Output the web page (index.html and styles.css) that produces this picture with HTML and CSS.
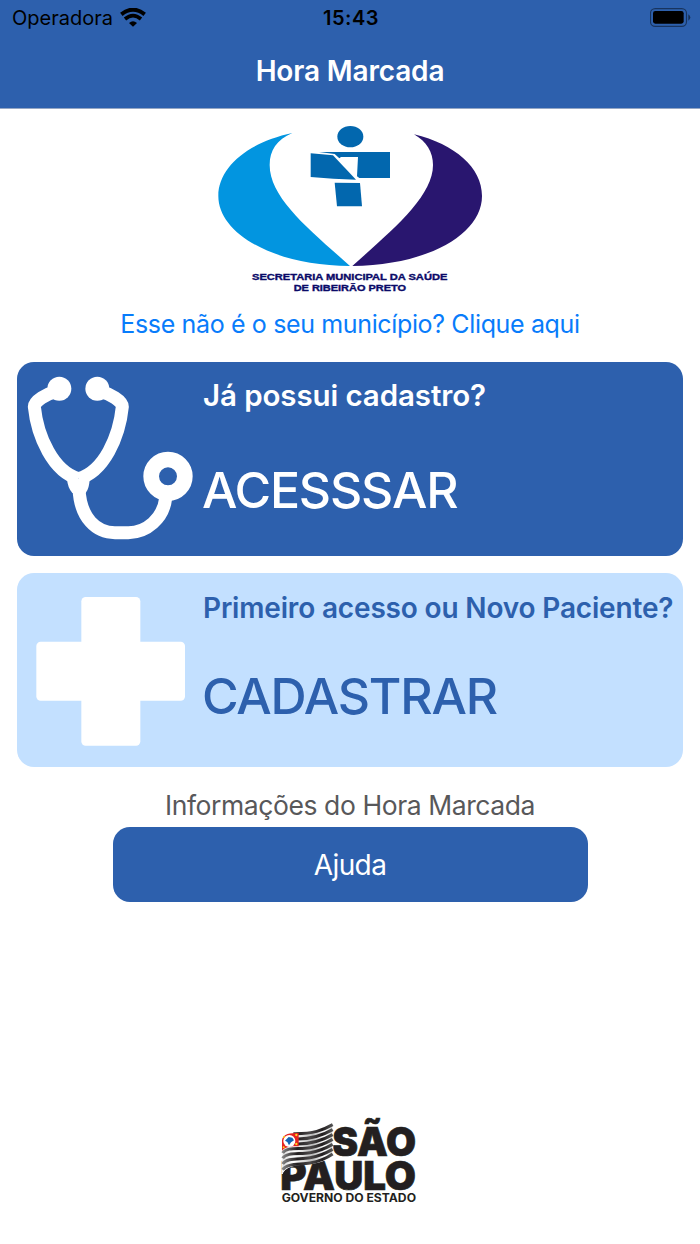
FILE: index.html
```html
<!DOCTYPE html>
<html lang="pt-BR">
<head>
    <meta charset="UTF-8">
    <meta name="viewport" content="width=device-width, initial-scale=1.0">
    <title>Hora Marcada</title>
    <link rel="stylesheet" href="styles.css">
</head>
<body>
<header class="header">
    <div class="status-bar">
        <div class="carrier">
            <span class="carrier-name">Operadora</span>
            <svg class="wifi" viewBox="0 0 78 57">
                <path d="M4 19 Q39 -9 74 19" fill="none" stroke="#000" stroke-width="12"/>
                <path d="M15 33 Q39 13 63 33" fill="none" stroke="#000" stroke-width="11"/>
                <path d="M27 45 Q39 34 51 45 L39 56z"/>
            </svg>
        </div>
        <span class="clock">15:43</span>
        <svg class="battery" viewBox="0 0 123 57">
            <rect x="1.5" y="2" width="108" height="53" rx="14" fill="none" stroke="#000" stroke-opacity=".45" stroke-width="3.5"/>
            <rect x="9" y="9" width="92" height="38" rx="7"/>
            <path d="M115 19 Q127 28 115 38z" fill-opacity=".5"/>
        </svg>
    </div>
    <h1 class="title">Hora Marcada</h1>
</header>

<main class="content">
    <svg class="city-logo" viewBox="0 0 900 555">
        <path fill="#0295e0" d="M277 54 C145 82 55 156 55 243 C55 355 220 452 450 453 C330 345 209 250 209 150 C209 105 230 75 277 54z"/>
        <path fill="#29166f" d="M642 58 C765 88 846 158 846 243 C846 355 690 450 457 453 C577 345 699 245 699 150 C699 112 680 80 642 58z"/>
        <g fill="#0267ae">
            <ellipse cx="451" cy="65" rx="39" ry="32"/>
            <path d="M332 115 L399 121 L468 194 Q400 193 332 186z"/>
            <path d="M357 111 H570 V189 H478 L471 184 L474 126 H423 L418 130 L404 117z"/>
            <path d="M404 203 L480 204 L486 274 H411z"/>
        </g>
        <text class="city-text" x="156" y="495" textLength="586" lengthAdjust="spacingAndGlyphs">SECRETARIA MUNICIPAL DA SAÚDE</text>
        <text class="city-text" x="281" y="528" textLength="337" lengthAdjust="spacingAndGlyphs">DE RIBEIRÃO PRETO</text>
    </svg>

    <a class="city-link" href="#">Esse não é o seu município? Clique aqui</a>

    <a class="card card-login" href="#">
        <svg class="card-icon" viewBox="21 21 534 582">
            <g fill="none" stroke="#fff" stroke-width="39">
                <path d="M140 109 C110 116 73 138 73 155 C82 245 130 350 205 371"/>
                <path d="M270 109 C300 116 337 138 337 155 C328 245 282 350 205 371"/>
                <path d="M207 400 C210 490 260 533 315 533 H355 C410 533 460 490 467 430"/>
                <circle cx="474" cy="364" r="50.5" stroke-width="47"/>
            </g>
            <g fill="#fff">
                <circle cx="148" cy="101" r="36"/>
                <circle cx="262" cy="101" r="36"/>
                <path d="M171 372 H239 Q238 400 227 414 H187 Q173 398 171 372z"/>
            </g>
        </svg>
        <div class="card-text">
            <span class="card-question">Já possui cadastro?</span>
            <span class="card-action">ACESSSAR</span>
        </div>
    </a>

    <a class="card card-register" href="#">
        <svg class="card-icon" viewBox="21 24 534 582">
            <rect x="214" y="96" width="177" height="446" rx="13" fill="#fff"/>
            <rect x="79" y="230" width="446" height="177" rx="13" fill="#fff"/>
        </svg>
        <div class="card-text">
            <span class="card-question">Primeiro acesso ou Novo Paciente?</span>
            <span class="card-action">CADASTRAR</span>
        </div>
    </a>

    <p class="info">Informações do Hora Marcada</p>
    <button type="button" class="btn-help">Ajuda</button>
</main>

<footer class="footer">
    <svg class="state-logo" viewBox="0 0 480 330">
        <defs>
            <linearGradient id="stripe" gradientUnits="userSpaceOnUse" x1="36" y1="0" x2="188" y2="0">
                <stop offset="0" stop-color="#888"/>
                <stop offset=".3" stop-color="#231f20"/>
                <stop offset=".55" stop-color="#4a4748"/>
                <stop offset=".8" stop-color="#231f20"/>
                <stop offset="1" stop-color="#555"/>
            </linearGradient>
            <linearGradient id="cloth" gradientUnits="userSpaceOnUse" x1="36" y1="0" x2="188" y2="0">
                <stop offset="0" stop-color="#ddd"/>
                <stop offset=".25" stop-color="#fff"/>
                <stop offset=".6" stop-color="#bbb"/>
                <stop offset=".85" stop-color="#fff"/>
                <stop offset="1" stop-color="#ccc"/>
            </linearGradient>
        </defs>
        <g class="state-name">
            <text x="187" y="153" textLength="251" lengthAdjust="spacingAndGlyphs">SÃO</text>
            <text x="31" y="254" textLength="407" lengthAdjust="spacingAndGlyphs">PAULO</text>
        </g>
        <!-- flag -->
        <path fill="url(#cloth)" stroke="#fff" stroke-width="3" d="M36 98 C50 78 90 86 120 80 C155 74 172 64 188 54 V151 C150 180 115 174 80 180 C55 184 43 193 36 207z"/>
        <g fill="none" stroke="url(#stripe)" stroke-width="9">
            <path d="M70 86 C130 87 158 76 188 59"/>
            <path d="M84 102 C130 102 158 91 188 74"/>
            <path d="M84 117 C130 117 158 106 188 89"/>
            <path d="M38 144 C50 124 90 134 120 128 C155 122 172 112 188 103"/>
            <path d="M38 160 C50 140 90 149 120 143 C155 137 172 127 188 118"/>
            <path d="M38 177 C50 157 90 164 120 158 C155 152 172 142 188 133"/>
            <path d="M38 194 C50 174 90 180 120 174 C155 168 172 158 188 147"/>
        </g>
        <path fill="#e52320" d="M36 105 C40 86 60 84 86 84 V124 C64 123 46 125 36 137z"/>
        <ellipse cx="58" cy="108" rx="18" ry="18" fill="#fff"/>
        <path fill="#1262b3" d="M45 107 L56 96 L67 98 L72 106 L63 112 L57 121 L52 111z"/>
        <g fill="#ffd51e">
            <circle cx="42" cy="96" r="3"/>
            <circle cx="79" cy="90" r="3.5"/>
            <circle cx="79" cy="117" r="3.5"/>
            <circle cx="41" cy="127" r="3"/>
        </g>
        <text class="state-sub" x="35" y="292" textLength="403" lengthAdjust="spacingAndGlyphs">GOVERNO DO ESTADO</text>
    </svg>
</footer>
</body>
</html>
```

FILE: styles.css
```css
*,
*::before,
*::after {
    box-sizing: border-box;
}

body {
    margin: 0;
    min-height: 1244px;
    display: flex;
    flex-direction: column;
    font-family: Inter, "Liberation Sans", sans-serif;
    background-color: #ffffff;
}

a {
    text-decoration: none;
}

.header {
    height: 109px;
    background-color: #2d60ad;
    border-bottom: 1px solid #94a6c4;
}

.status-bar {
    display: grid;
    grid-template-columns: 1fr auto 1fr;
    align-items: center;
    height: 36px;
    padding: 0 9px 0 12px;
    font-size: 20px;
    color: #000000;
}

.carrier {
    display: flex;
    align-items: center;
    gap: 7px;
}

.wifi {
    width: 26px;
    height: 19px;
    margin-bottom: 2px;
}

.clock {
    font-weight: 600;
    letter-spacing: 0.5px;
    margin-left: -1px;
}

.battery {
    width: 41px;
    height: 19px;
    margin-bottom: 2px;
    justify-self: end;
}

.title {
    margin: 17px 0 0;
    font-size: 28px;
    line-height: 37px;
    font-weight: 600;
    letter-spacing: -0.15px;
    text-align: center;
    color: #ffffff;
}

.content {
    display: flex;
    flex-direction: column;
    align-items: center;
    padding: 6px 17px 0;
}

.city-logo {
    width: 300px;
    height: 185px;
}

.city-text {
    font-family: "Liberation Sans", Arial, sans-serif;
    font-size: 25px;
    font-weight: bold;
    fill: #0a0a68;
    stroke: #0a0a68;
    stroke-width: 1px;
}

.city-link {
    margin-top: 8px;
    font-size: 25px;
    line-height: 32px;
    letter-spacing: -0.36px;
    color: #087cfb;
}

.card {
    display: flex;
    width: 100%;
    height: 194px;
    border-radius: 17px;
    white-space: nowrap;
}

.card-login {
    margin-top: 22px;
    background-color: #2d60ad;
    color: #ffffff;
}

.card-register {
    margin-top: 17px;
    background-color: #c3e0ff;
    color: #2d60ad;
}

.card-icon {
    width: 178px;
    height: 194px;
    flex-shrink: 0;
}

.card-text {
    display: flex;
    flex-direction: column;
    padding: 13px 0 0 8px;
}

.card-question {
    font-size: 28px;
    line-height: 40px;
    font-weight: 600;
    letter-spacing: -0.17px;
}

.card-login .card-question {
    font-size: 29.5px;
    letter-spacing: -0.1px;
}

.card-action {
    margin-top: 45px;
    font-size: 50px;
    line-height: 60px;
    font-weight: 500;
    letter-spacing: -1.2px;
    margin-left: -1px;
}

.card-register .card-question {
    padding-top: 2px;
}

.card-register .card-action {
    margin-top: 38px;
}

.info {
    margin: 20px 0 0;
    font-size: 26.5px;
    line-height: 36px;
    letter-spacing: -0.42px;
    color: #58585a;
}

.btn-help {
    width: 475px;
    height: 75px;
    margin-top: 4px;
    padding: 0;
    border: none;
    border-radius: 17px;
    background-color: #2d60ad;
    color: #ffffff;
    font-family: inherit;
    font-size: 28px;
    letter-spacing: -0.6px;
    cursor: pointer;
}

.footer {
    display: flex;
    justify-content: center;
    margin-top: auto;
    padding-bottom: 29px;
}

.state-logo {
    width: 160px;
    height: 110px;
}

.state-name {
    font-size: 118px;
    font-weight: 900;
    fill: #231f20;
    stroke: #231f20;
    stroke-width: 2px;
}

.state-sub {
    font-size: 34px;
    font-weight: 700;
    fill: #231f20;
}
```
